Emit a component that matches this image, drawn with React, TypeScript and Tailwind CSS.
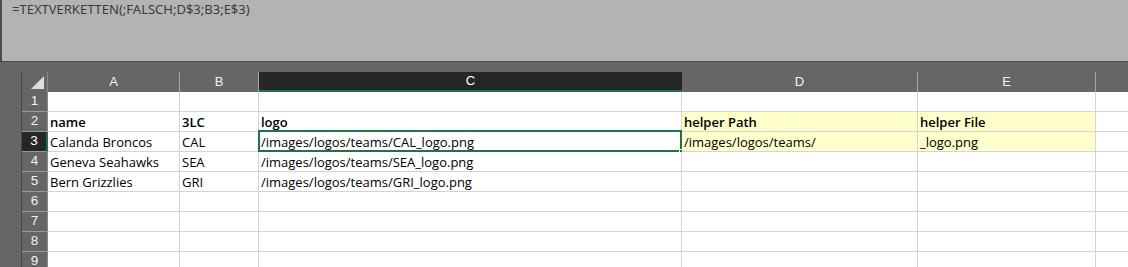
import React from 'react';

const cols = [
  { key: 'A', width: 'w-[132px]' },
  { key: 'B', width: 'w-[79px]' },
  { key: 'C', width: 'w-[423px]' },
  { key: 'D', width: 'w-[236px]' },
  { key: 'E', width: 'w-[178px]' },
  { key: 'F', width: 'w-[40px]' },
];

type Cell = { text?: string; bold?: boolean; yellow?: boolean };

const rows: Cell[][] = [
  [{}, {}, {}, {}, {}, {}],
  [
    { text: 'name', bold: true },
    { text: '3LC', bold: true },
    { text: 'logo', bold: true },
    { text: 'helper Path', bold: true, yellow: true },
    { text: 'helper File', bold: true, yellow: true },
    {},
  ],
  [
    { text: 'Calanda Broncos' },
    { text: 'CAL' },
    { text: '/images/logos/teams/CAL_logo.png' },
    { text: '/images/logos/teams/', yellow: true },
    { text: '_logo.png', yellow: true },
    {},
  ],
  [
    { text: 'Geneva Seahawks' },
    { text: 'SEA' },
    { text: '/images/logos/teams/SEA_logo.png' },
    {},
    {},
    {},
  ],
  [
    { text: 'Bern Grizzlies' },
    { text: 'GRI' },
    { text: '/images/logos/teams/GRI_logo.png' },
    {},
    {},
    {},
  ],
  [{}, {}, {}, {}, {}, {}],
  [{}, {}, {}, {}, {}, {}],
  [{}, {}, {}, {}, {}, {}],
  [{}, {}, {}, {}, {}, {}],
];

const App: React.FC = () => {
  return (
    <div className="w-[1128px] h-[267px] bg-[#666666] overflow-hidden font-['Liberation_Sans',sans-serif]">
      {/* Formula bar */}
      <div className="h-[62px] bg-[#b3b3b3] border-l-2 border-b border-[#4d4d4d] pl-[10px] pt-[1px] text-[13px] leading-[16px] text-[#3c3c3c] font-['Noto_Sans',sans-serif]">
        =TEXTVERKETTEN(;FALSCH;D$3;B3;E$3)
      </div>

      {/* Sheet */}
      <div className="mt-[10px] ml-[21px] w-max border-l border-[#4a4a4a]">
        {/* Column headers */}
        <div className="flex h-[20px]">
          <div className="w-[26px] shrink-0 h-[20px] relative border-r border-[#8a8a8a]">
            <div className="absolute right-[3px] bottom-[3px] w-0 h-0 border-l-[13px] border-l-transparent border-b-[13px] border-b-[#dedede]" />
          </div>
          {cols.map((c) =>
            c.key === 'C' ? (
              <div
                key={c.key}
                className={`${c.width} shrink-0 h-[20px] bg-[#262626] border-b-2 border-[#217346] flex items-center justify-center text-[13px] text-white`}
              >
                {c.key}
              </div>
            ) : (
              <div
                key={c.key}
                className={`${c.width} shrink-0 h-[20px] border-r border-[#a6a6a6] flex items-center justify-center text-[13px] text-[#f2f2f2]`}
              >
                {c.key === 'F' ? '' : c.key}
              </div>
            )
          )}
        </div>

        {/* Rows */}
        {rows.map((r, i) => {
          const selectedRow = i === 2;
          return (
            <div key={i} className="flex h-[20px]">
              <div
                className={`w-[26px] shrink-0 h-[20px] flex items-center justify-center text-[13.5px] ${
                  selectedRow
                    ? 'bg-[#262626] text-white border-r-2 border-r-[#217346] border-b border-b-[#9a9a9a]'
                    : 'text-[#f2f2f2] border-r border-r-[#8a8a8a] border-b border-b-[#9a9a9a]'
                }`}
              >
                {i + 1}
              </div>
              {r.map((cell, j) => {
                const selected = selectedRow && j === 2;
                return (
                  <div
                    key={j}
                    className={`${cols[j].width} shrink-0 h-[20px] relative border-r border-b border-[#d4d4d4] ${
                      cell.yellow ? 'bg-[#ffffcc]' : 'bg-white'
                    } flex items-end pl-[2px] font-['Open_Sans',sans-serif] text-[13px] leading-[18px] text-black whitespace-nowrap ${
                      cell.bold ? 'font-semibold' : ''
                    }`}
                  >
                    {cell.text}
                    {selected && (
                      <>
                        <div className="absolute -left-[1px] -top-[2px] -right-[1px] -bottom-[1px] border-2 border-[#217346]" />
                        <div className="absolute -right-[4px] -bottom-[4px] w-[6px] h-[6px] bg-[#217346] border border-white" />
                      </>
                    )}
                  </div>
                );
              })}
            </div>
          );
        })}
      </div>
    </div>
  );
};

export default App;
